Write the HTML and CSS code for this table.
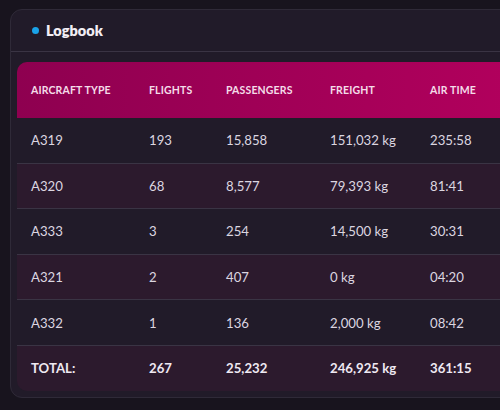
FILE: index.html
```html
<!DOCTYPE html>
<html>
<head>
<meta charset="utf-8">
<link rel="stylesheet" href="styles.css">
</head>
<body>
<div class="card">
  <div class="card-header">
    <span class="dot"></span>
    <span class="title">Logbook</span>
  </div>
  <div class="card-body">
    <table class="log">
      <colgroup>
        <col class="c1"><col class="c2"><col class="c3"><col class="c4"><col class="c5">
      </colgroup>
      <thead>
        <tr>
          <th>Aircraft type</th>
          <th>Flights</th>
          <th>Passengers</th>
          <th>Freight</th>
          <th>Air time</th>
        </tr>
      </thead>
      <tbody>
        <tr><td>A319</td><td>193</td><td>15,858</td><td>151,032 kg</td><td>235:58</td></tr>
        <tr class="alt"><td>A320</td><td>68</td><td>8,577</td><td>79,393 kg</td><td>81:41</td></tr>
        <tr><td>A333</td><td>3</td><td>254</td><td>14,500 kg</td><td>30:31</td></tr>
        <tr class="alt"><td>A321</td><td>2</td><td>407</td><td>0 kg</td><td>04:20</td></tr>
        <tr><td>A332</td><td>1</td><td>136</td><td>2,000 kg</td><td>08:42</td></tr>
        <tr class="alt total"><td>TOTAL:</td><td>267</td><td>25,232</td><td>246,925 kg</td><td>361:15</td></tr>
      </tbody>
    </table>
  </div>
</div>
</body>
</html>
```
FILE: styles.css
```css
html, body {
  margin: 0;
  padding: 0;
  background: #18141e;
  overflow: hidden;
  width: 500px;
  height: 410px;
}
body {
  padding: 9px 0 0 10px;
  box-sizing: border-box;
  font-family: Lato, "Noto Sans", sans-serif;
  color: #dcd6e0;
}
.card {
  width: 600px;
  background: #211b29;
  border: 1px solid #2f2a38;
  border-radius: 12px;
}
.card-header {
  height: 41px;
  display: flex;
  align-items: center;
  padding-left: 21px;
  border-bottom: 1px solid #3a3444;
}
.dot {
  width: 7px;
  height: 7px;
  border-radius: 50%;
  background: #1aa3e8;
  margin-right: 7px;
}
.title {
  font-weight: 800;
  font-size: 14.5px;
  color: #f2eef4;
}
.card-body {
  padding: 10px 6px 6px 6px;
}
.log {
  width: 588px;
  border-collapse: collapse;
  border-radius: 10px 10px 0 10px;
  overflow: hidden;
  table-layout: fixed;
}
.c1 { width: 118px; }
.c2 { width: 77px; }
.c3 { width: 104px; }
.c4 { width: 100px; }
.c5 { width: 189px; }
.log thead tr {
  background: linear-gradient(90deg, #8e0050 0%, #b8005f 100%);
}
.log th {
  height: 56px;
  padding: 0 0 0 14px;
  text-align: left;
  text-transform: uppercase;
  font-size: 10.5px;
  font-weight: 700;
  color: #f4dce8;
  letter-spacing: 0.15px;
  white-space: nowrap;
}
.log td {
  height: 44.6px;
  padding: 0 0 0 14px;
  font-size: 13.2px;
  border-top: 1px solid #3a3444;
  white-space: nowrap;
}
.log tbody tr:first-child td {
  border-top: none;
}
.log tr.alt {
  background: #2c1a2d;
}
.log tr.total td {
  font-weight: 700;
  color: #efe9f2;
}
```
